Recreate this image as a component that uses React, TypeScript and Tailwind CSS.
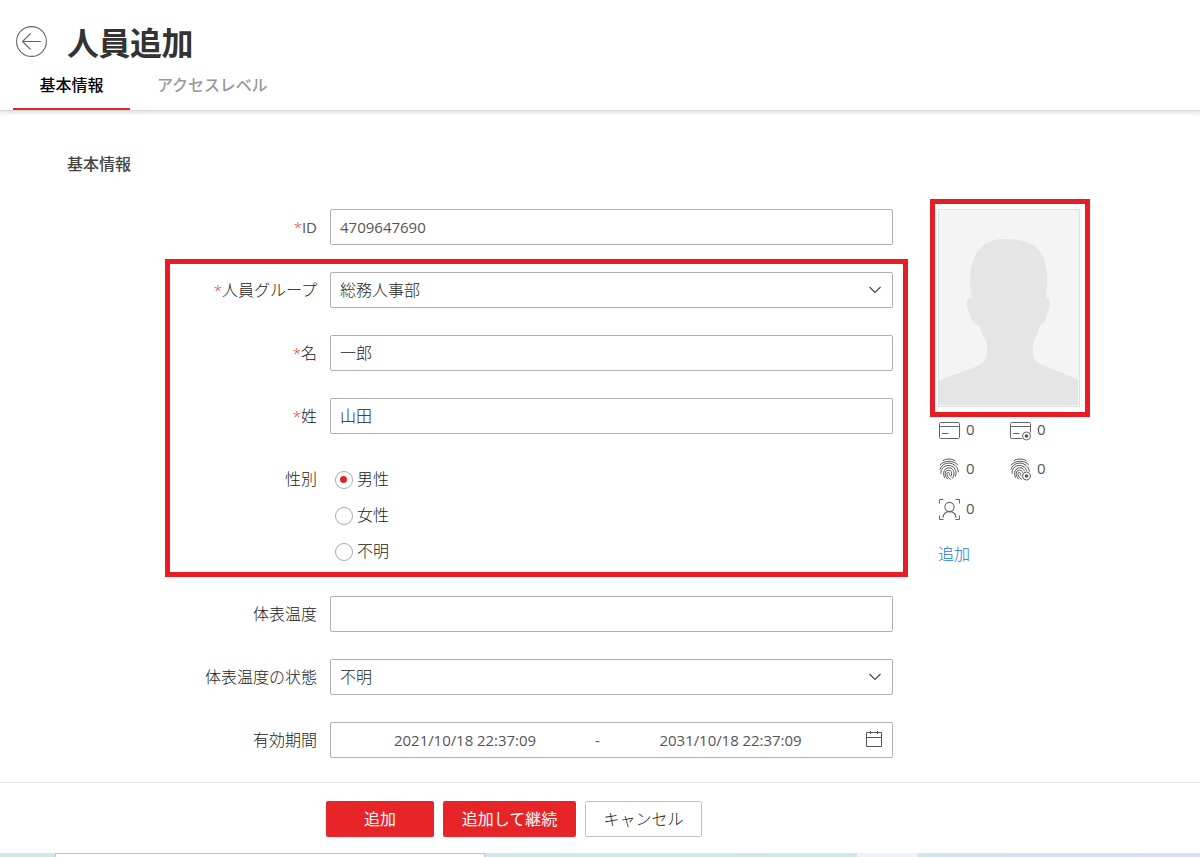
import type { ReactNode } from 'react';
import clsx from 'clsx';

interface FieldRowProps {
    label: string;
    required?: boolean;
    children: ReactNode;
}

function FieldRow({ label, required = false, children }: FieldRowProps) {
    return (
        <div className="flex items-start gap-[13px]">
            <div className="flex h-9 w-[317px] shrink-0 items-center justify-end whitespace-nowrap">
                {required && <span className="text-[15px] text-[#e02f36]">*</span>}
                <span className={label === 'ID' ? 'text-[15px] font-normal text-[#555]' : ''}>{label}</span>
            </div>
            {children}
        </div>
    );
}

function InputBox({ children, className }: { children?: ReactNode; className?: string }) {
    return (
        <div className={clsx('flex h-9 w-[563px] items-center rounded-xs border border-[#b0b0b0] bg-white px-[9px]', className)}>
            {children}
        </div>
    );
}

function Chevron() {
    return (
        <svg width="14" height="8" viewBox="0 0 14 8" fill="none" stroke="#444" strokeWidth="1.1" className="mr-[1px] mb-[1px] ml-auto">
            <path d="M1.500 1l5.500 5.500 5.500-5.500" />
        </svg>
    );
}

function Radio({ label, checked = false }: { label: string; checked?: boolean }) {
    return (
        <div className="flex h-9 items-center gap-1 pl-[5px]">
            <span className="mt-0.5 flex size-[18px] items-center justify-center rounded-full border border-[#aaa]">
                {checked && <span className="mr-px mb-px size-[7px] rounded-full bg-[#e02424]" />}
            </span>
            <span>{label}</span>
        </div>
    );
}

/* Small badge drawn on the lower right of the duress icons */
function Badge() {
    return (
        <g>
            <circle cx="17.500" cy="18" r="5.2" fill="#fff" stroke="none" />
            <circle cx="17.500" cy="18" r="4" fill="#fff" />
            <circle cx="17.500" cy="18" r="1.8" fill="#555" stroke="none" />
        </g>
    );
}

function CardIcon({ badge = false }: { badge?: boolean }) {
    return (
        <svg width="23" height="24" viewBox="0 0 23 24" fill="none" stroke="#666" strokeWidth="1">
            <rect x="1.5" y="4.5" width="20" height="16" rx="1" />
            <path d="M1.5 8.5h20M4 15.5h6.5" />
            {badge && <Badge />}
        </svg>
    );
}

function FingerprintIcon({ badge = false }: { badge?: boolean }) {
    return (
        <svg width="23" height="24" viewBox="0 0 23 24" fill="none" stroke="#555" strokeWidth="1" strokeLinecap="round">
            <path d="M5 3.500C8.500 1.500 13.500 1.500 17 3.500" />
            <path d="M2 8C6.500 3.200 15 2.800 19.500 7.500" />
            <path d="M2 12.200C4 6.500 10 4.800 14.800 7C18.500 8.800 20.300 11.500 20.300 15" />
            <path d="M3 16.500C2.500 12 6 8.300 10.800 8.500C15.500 8.700 18 12 18 16.500L17.500 19" />
            <path d="M6.500 20.500C4.200 15.500 6.500 10.800 10.800 10.800C14.200 10.800 16 13.500 15.900 17C15.800 18.800 15.300 20 14.800 21" />
            <path d="M9.500 22C6.500 18.500 6.200 13.200 10.500 13.100C13.300 13 14 15.500 13.500 18.300" />
            <path d="M12.500 22.300C9.800 20.500 8.500 17.800 9.200 16C9.800 14.800 11.200 15.100 11.300 16.400C11.400 17.800 12.200 19 13.200 19.800" />
            {badge && <g transform="translate(0 1)"><Badge /></g>}
        </svg>
    );
}

function FaceIcon() {
    return (
        <svg width="23" height="24" viewBox="0 0 23 24" fill="none" stroke="#666" strokeWidth="1">
            <path d="M1.500 6.500v-4h4M17.500 2.500h4v4M21.500 18.500v4h-4M5.500 22.500h-4v-4" />
            <circle cx="11.500" cy="10" r="4.600" strokeWidth="1.100" />
            <path d="M5 20.800C5.300 17 8 14.600 11.500 14.600C15 14.600 17.700 17 18 20.800" strokeWidth="1.100" />
        </svg>
    );
}

function Count({ icon, className }: { icon: ReactNode; className?: string }) {
    return (
        <div className={clsx('flex h-6 items-center gap-[5px] text-[15px] font-normal text-[#555]', className)}>
            {icon}
            <span className="-mt-0.5">0</span>
        </div>
    );
}

function Photo() {
    return (
        <div className="relative h-[198px] w-[142px] border border-[#e0e0e0] bg-[#f4f4f4]">
            <svg width="140" height="196" viewBox="0 0 140 196" className="block">
                <path
                    fill="#e5e5e5"
                    d="M0 170.500L39 156C45 153 48 148 48 143V133C45 127 41 121 39.500 114.500C37 116 34 113 32 108C29 101 27.500 96 28 92C28.500 88 31 87 33 87.500C31 82 31 72 31.500 63C32.500 51 37 41 45 34.500C50 30.500 60 28.500 69 29C83 29 95 33 102 43C109 53 109 74 107 87.500C109 87 111 89 111 93C111 98 108.500 104 106 110C104.500 114 102.500 115.500 101 114C100 121 97 127 94 133V143C94 147 96 151 101 154L139 169.500V195H0Z"
                />
            </svg>
            <div className="pointer-events-none absolute -top-[11px] -left-[9px] h-[218px] w-[160px] border-[5px] border-[#e81c24]" />
        </div>
    );
}

function PersonPanel() {
    return (
        <div className="ml-[45px] flex flex-col items-start">
            <Photo />
            <div className="mt-[11px] grid grid-cols-[71px_72px] gap-y-[15px]">
                <Count icon={<CardIcon />} />
                <Count icon={<CardIcon badge />} className="gap-1.5" />
                <Count icon={<FingerprintIcon />} />
                <Count icon={<FingerprintIcon badge />} className="gap-1.5" />
                <Count icon={<FaceIcon />} className="mt-px" />
            </div>
            <a className="mt-[21px] leading-6 text-[#1279d6]">追加</a>
        </div>
    );
}

export default function App() {
    return (
        <div className="flex h-[857px] w-[1200px] flex-col overflow-hidden bg-white font-['Open_Sans','Noto_Sans_CJK_JP',sans-serif] text-base leading-6 font-light text-[#222]">
            <header className="z-10 flex h-[111px] shrink-0 flex-col justify-between border-b border-[#d5d5d5] shadow-[0_2px_4px_rgba(0,0,0,0.12)]">
                <div className="flex h-[60px] items-center gap-5 pt-[24px] pl-4">
                    <svg width="31" height="31" viewBox="0 0 31 31" fill="none" stroke="#666" strokeWidth="1.1" className="-mt-px">
                        <circle cx="15.500" cy="15.500" r="14.900" />
                        <path d="M25 15.500H6.500M14.500 7.500l-8 8 8 8" />
                    </svg>
                    <h1 className="mt-0.5 text-[32px] leading-10 font-bold tracking-[-0.5px] text-[#333]">人員追加</h1>
                </div>
                <nav className="flex h-[37px] pl-[13px]">
                    <div className="w-[117px] border-b-2 border-[#d92b2f] text-center font-medium text-black">基本情報</div>
                    <div className="ml-[27px] font-medium tracking-[-0.1px] text-[#999]">アクセスレベル</div>
                </nav>
            </header>

            <main className="flex min-h-0 flex-1 flex-col pt-[41px]">
                <h2 className="ml-[67px] font-medium text-[#444]">基本情報</h2>
                <div className="mt-[33px] flex">
                    <div className="flex flex-col gap-[27px]">
                        <FieldRow label="ID" required>
                            <InputBox className="text-[15px] font-normal text-[#555]">4709647690</InputBox>
                        </FieldRow>

                        {/* Highlighted block */}
                        <div className="relative flex flex-col gap-[27px]">
                            <FieldRow label="人員グループ" required>
                                <InputBox>総務人事部<Chevron /></InputBox>
                            </FieldRow>
                            <FieldRow label="名" required>
                                <InputBox>一郎</InputBox>
                            </FieldRow>
                            <FieldRow label="姓" required>
                                <InputBox>山田</InputBox>
                            </FieldRow>
                            <FieldRow label="性別">
                                <div>
                                    <Radio label="男性" checked />
                                    <Radio label="女性" />
                                    <Radio label="不明" />
                                </div>
                            </FieldRow>
                            <div className="pointer-events-none absolute -top-[13px] left-[165px] h-[318px] w-[743px] border-[5px] border-[#e81c24]" />
                        </div>

                        <FieldRow label="体表温度">
                            <InputBox />
                        </FieldRow>
                        <FieldRow label="体表温度の状態">
                            <InputBox>不明<Chevron /></InputBox>
                        </FieldRow>
                        <FieldRow label="有効期間">
                            <InputBox className="text-[15px] font-normal text-[#555]">
                                <span className="w-[250px] text-center tracking-[-0.05px]">2021/10/18 22:37:09</span>
                                <span className="w-[15px] text-center">-</span>
                                <span className="w-[251px] text-center tracking-[-0.05px]">2031/10/18 22:37:09</span>
                                <svg width="18" height="18" viewBox="0 0 18 18" fill="none" stroke="#555" strokeWidth="1" className="mb-[3px] ml-auto">
                                    <path d="M1.500 2.500h15v14h-15zM1.500 7.500h15M5.500 1v3M12.500 1v3" />
                                </svg>
                            </InputBox>
                        </FieldRow>
                    </div>
                    <PersonPanel />
                </div>
            </main>

            <footer className="flex h-[71px] shrink-0 gap-[9px] border-t border-[#e2e2e2] pt-[18px] pl-[326px]">
                <button className="h-9 w-[108px] rounded-xs bg-[#e72528] font-normal text-white">追加</button>
                <button className="h-9 w-[133px] rounded-xs bg-[#e72528] font-normal text-white">追加して継続</button>
                <button className="h-9 w-[117px] rounded-xs border border-[#c4c4c4] bg-white">キャンセル</button>
            </footer>

            {/* Strip of the desktop behind the window */}
            <div className="flex h-1 shrink-0 bg-linear-to-r from-[#cfe6ec] from-60% to-[#d5e0ef]">
                <div className="ml-[55px] w-[430px] border-x border-t border-[#c4c4c4] bg-white" />
                <div className="ml-[372px] w-[61px] bg-[#edf3fa]" />
            </div>
        </div>
    );
}
